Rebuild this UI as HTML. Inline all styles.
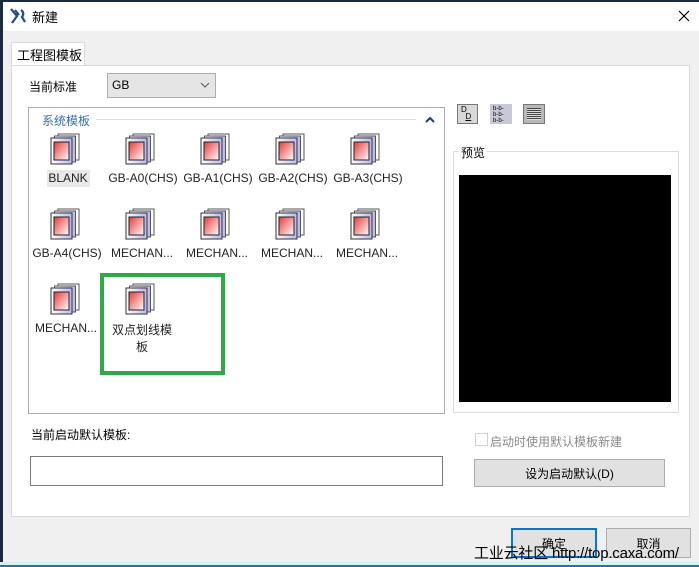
<!DOCTYPE html>
<html><head><meta charset="utf-8"><style>
*{margin:0;padding:0;box-sizing:border-box}
body{width:699px;height:567px;overflow:hidden;background:#f0f0f0;font-family:"Liberation Sans","Noto Sans CJK SC",sans-serif;font-size:12px;color:#000;position:relative}
.a{position:absolute}
.t{white-space:nowrap}
.ic{position:absolute;width:34px;height:32px}
.lb{position:absolute;width:76px;text-align:center;font-size:12px;white-space:nowrap;color:#222}
</style></head><body>
<div class="a" style="left:0;top:0;width:699px;height:31px;background:#fff"></div>
<div class="a" style="left:0;top:0;width:3px;height:567px;background:#1a2a40"></div>
<div class="a" style="left:0;top:0;width:699px;height:2px;background:#1a2a40"></div>
<svg class="a" style="left:9px;top:7px" width="18" height="18" viewBox="0 0 18 18"><path d="M2 2 L8 9 L3 16 M6 3 L10 8 M12 3 Q16 6 13 10 L16 15" stroke="#1f4c8c" stroke-width="2.2" fill="none"/></svg>
<div class="a t" style="left:32px;top:7px;font-size:13px">新建</div>
<svg class="a" style="left:678px;top:10px" width="12" height="12"><path d="M1 1 L11 11 M11 1 L1 11" stroke="#000" stroke-width="1.2"/></svg>

<div class="a" style="left:11px;top:42px;width:74px;height:24px;background:#fff;border:1px solid #d9d9d9;border-bottom:none"></div>
<div class="a t" style="left:17px;top:45px;font-size:13px">工程图模板</div>
<div class="a" style="left:11px;top:65px;width:679px;height:452px;background:#fff;border:1px solid #d9d9d9"></div>

<div class="a t" style="left:29px;top:78px">当前标准</div>
<div class="a" style="left:107px;top:73px;width:109px;height:25px;background:#e5e5e5;border:1px solid #adadad"></div>
<div class="a t" style="left:112px;top:78px">GB</div>
<svg class="a" style="left:200px;top:81px" width="10" height="8"><path d="M1 2 L5 6 L9 2" stroke="#555" fill="none"/></svg>

<div class="a" style="left:28px;top:107px;width:417px;height:307px;border:1px solid #adadad"></div>
<div class="a" style="left:96px;top:119px;width:320px;height:1px;background:#dcdcdc"></div>
<div class="a t" style="left:42px;top:112px;color:#3a6fb0">系统模板</div>
<svg class="a" style="left:425px;top:116px" width="10" height="8"><path d="M1 6 L5 2 L9 6" stroke="#1f3f6f" stroke-width="2" fill="none"/></svg>

<svg width="0" height="0" style="position:absolute"><defs>
<linearGradient id="g" x1="0" y1="0" x2="1" y2="1"><stop offset="0" stop-color="#e63a3a"/><stop offset="1" stop-color="#fff"/></linearGradient>
<linearGradient id="p" x1="0" y1="0" x2="1" y2="0"><stop offset="0" stop-color="#fff"/><stop offset="1" stop-color="#b8b8f0"/></linearGradient>
<g id="doc"><rect x="11" y="1" width="21" height="26" fill="#fff" stroke="#555"/><rect x="7.5" y="3" width="21" height="26" fill="url(#p)" stroke="#555"/><rect x="4" y="5" width="21" height="26" fill="url(#p)" stroke="#333"/><rect x="7" y="9" width="15" height="18" fill="url(#g)" stroke="#222"/></g>
</defs></svg>

<div class="a" style="left:47px;top:170px;width:43px;height:17px;background:#e8e8e8"></div>
<svg class="ic" style="left:47px;top:133px"><use href="#doc"/></svg>
<svg class="ic" style="left:122px;top:133px"><use href="#doc"/></svg>
<svg class="ic" style="left:197px;top:133px"><use href="#doc"/></svg>
<svg class="ic" style="left:272px;top:133px"><use href="#doc"/></svg>
<svg class="ic" style="left:347px;top:133px"><use href="#doc"/></svg>
<div class="lb" style="left:30px;top:171px">BLANK</div>
<div class="lb" style="left:105px;top:171px">GB-A0(CHS)</div>
<div class="lb" style="left:180px;top:171px">GB-A1(CHS)</div>
<div class="lb" style="left:255px;top:171px">GB-A2(CHS)</div>
<div class="lb" style="left:330px;top:171px">GB-A3(CHS)</div>

<svg class="ic" style="left:47px;top:208px"><use href="#doc"/></svg>
<svg class="ic" style="left:122px;top:208px"><use href="#doc"/></svg>
<svg class="ic" style="left:197px;top:208px"><use href="#doc"/></svg>
<svg class="ic" style="left:272px;top:208px"><use href="#doc"/></svg>
<svg class="ic" style="left:347px;top:208px"><use href="#doc"/></svg>
<div class="lb" style="left:29px;top:246px">GB-A4(CHS)</div>
<div class="lb" style="left:104px;top:246px">MECHAN...</div>
<div class="lb" style="left:179px;top:246px">MECHAN...</div>
<div class="lb" style="left:254px;top:246px">MECHAN...</div>
<div class="lb" style="left:329px;top:246px">MECHAN...</div>

<svg class="ic" style="left:47px;top:283px"><use href="#doc"/></svg>
<svg class="ic" style="left:122px;top:283px"><use href="#doc"/></svg>
<div class="lb" style="left:28px;top:321px">MECHAN...</div>
<div class="lb" style="left:104px;top:321px">双点划线模</div>
<div class="lb" style="left:104px;top:338px">板</div>
<div class="a" style="left:100px;top:273px;width:125px;height:102px;border:4px solid #2faa4a"></div>

<div class="a" style="left:457px;top:104px;width:21px;height:20px;background:#d8d8d8;border:1px solid #777"></div>
<div class="a t" style="left:461px;top:106px;font-size:8px;line-height:7px">D<br>&nbsp;&nbsp;<u>D</u></div>
<div class="a" style="left:490px;top:104px;width:22px;height:20px;background:#c8c8d8;font-size:6px;line-height:6px;padding:2px 3px">b-b-<br>b-b-<br>b-b-</div>
<div class="a" style="left:523px;top:104px;width:22px;height:20px;background:#b8b8b8;border:1px solid #777"></div>
<div class="a" style="left:527px;top:108px;width:14px;height:12px;background:repeating-linear-gradient(#444 0 1px,#ddd 1px 2px)"></div>

<div class="a" style="left:453px;top:151px;width:226px;height:262px;border:1px solid #dcdcdc"></div>
<div class="a t" style="left:459px;top:144px;background:#fff;padding:0 2px">预览</div>
<div class="a" style="left:459px;top:175px;width:212px;height:227px;background:#000"></div>

<div class="a t" style="left:31px;top:426px">当前启动默认模板:</div>
<div class="a" style="left:30px;top:456px;width:413px;height:30px;border:1px solid #7a7a7a"></div>
<div class="a" style="left:475px;top:433px;width:13px;height:13px;border:1px solid #cfcfcf"></div>
<div class="a t" style="left:490px;top:433px;color:#8a8a8a">启动时使用默认模板新建</div>
<div class="a" style="left:474px;top:459px;width:191px;height:28px;background:#e1e1e1;border:1px solid #adadad"></div>
<div class="a t" style="left:474px;top:465px;width:191px;text-align:center">设为启动默认(D)</div>

<div class="a" style="left:511px;top:528px;width:86px;height:30px;background:#e1e1e1;border:2px solid #0078d7"></div>
<div class="a t" style="left:511px;top:535px;width:86px;text-align:center">确定</div>
<div class="a" style="left:606px;top:528px;width:85px;height:30px;background:#e1e1e1;border:1px solid #adadad"></div>
<div class="a t" style="left:606px;top:535px;width:85px;text-align:center">取消</div>
<div class="a t" style="left:474px;top:542px;font-size:15px;letter-spacing:-0.2px">工业云社区 http://top.caxa.com/</div>
<div class="a" style="left:0;top:562px;width:699px;height:3px;background:#d4f0f4"></div>
<div class="a" style="left:0;top:565px;width:699px;height:2px;background:#2a6fa8"></div>
</body></html>
